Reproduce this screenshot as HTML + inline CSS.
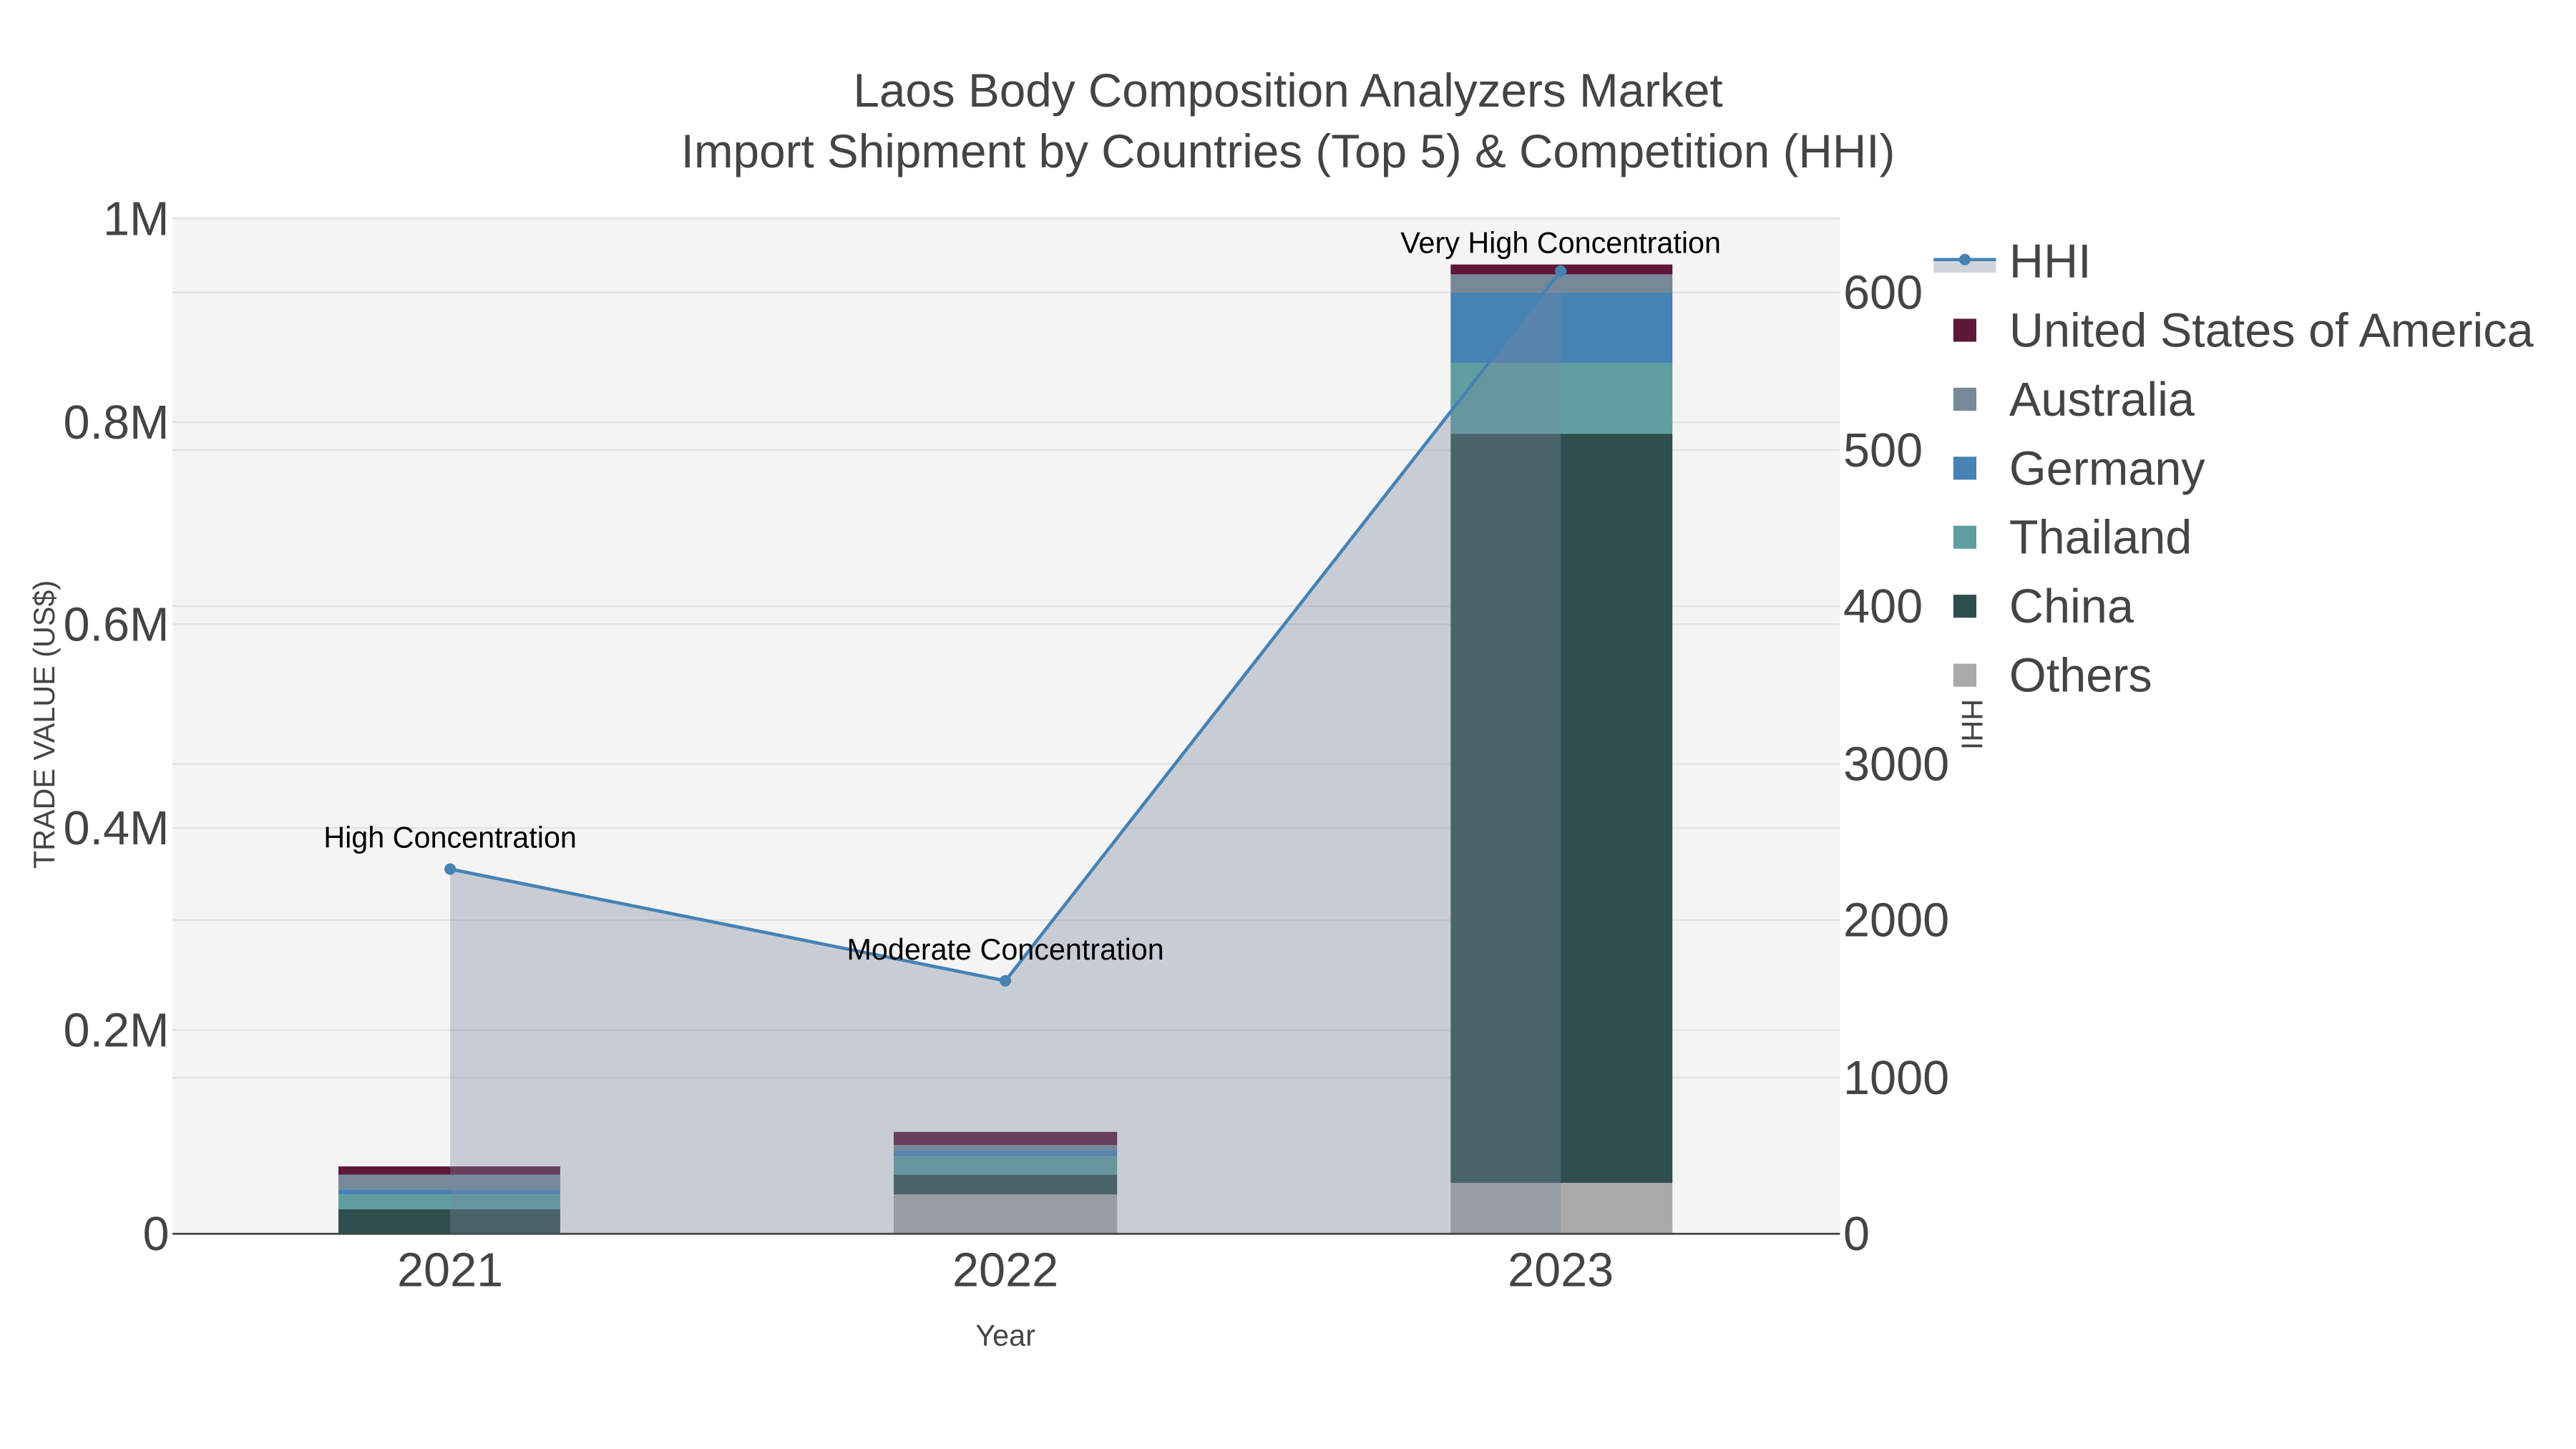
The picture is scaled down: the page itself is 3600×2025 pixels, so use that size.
<!DOCTYPE html>
<html><head><meta charset="utf-8"><style>html,body{margin:0;padding:0;background:#fff}svg{display:block}</style></head>
<body>
<svg width="3600" height="2025" viewBox="0 0 1568 882" preserveAspectRatio="none" xmlns="http://www.w3.org/2000/svg" font-family="Liberation Sans, sans-serif">
<rect x="0" y="0" width="1568" height="882" fill="#fff"/>
<rect x="105" y="132" width="1015" height="619" fill="#f4f4f4"/>
<g stroke="#e2e2e2" stroke-width="1">
<line x1="105" x2="1120" y1="627" y2="627"/><line x1="105" x2="1120" y1="504" y2="504"/>
<line x1="105" x2="1120" y1="380" y2="380"/><line x1="105" x2="1120" y1="257" y2="257"/>
<line x1="105" x2="1120" y1="133" y2="133"/>
<line x1="105" x2="1120" y1="656" y2="656"/><line x1="105" x2="1120" y1="560" y2="560"/>
<line x1="105" x2="1120" y1="465" y2="465"/><line x1="105" x2="1120" y1="369" y2="369"/>
<line x1="105" x2="1120" y1="274" y2="274"/><line x1="105" x2="1120" y1="178" y2="178"/>
</g>
<rect x="206" y="736" width="135" height="15" fill="#2f4f4f"/>
<rect x="206" y="727" width="135" height="9" fill="#5f9ea0"/>
<rect x="206" y="724" width="135" height="3" fill="#4682b4"/>
<rect x="206" y="715" width="135" height="9" fill="#778899"/>
<rect x="206" y="710" width="135" height="5" fill="#5e1739"/>
<rect x="544" y="727" width="136" height="24" fill="#aaaaaa"/>
<rect x="544" y="715" width="136" height="12" fill="#2f4f4f"/>
<rect x="544" y="704" width="136" height="11" fill="#5f9ea0"/>
<rect x="544" y="700" width="136" height="4" fill="#4682b4"/>
<rect x="544" y="697" width="136" height="3" fill="#778899"/>
<rect x="544" y="689" width="136" height="8" fill="#5e1739"/>
<rect x="883" y="720" width="135" height="31" fill="#aaaaaa"/>
<rect x="883" y="264" width="135" height="456" fill="#2f4f4f"/>
<rect x="883" y="221" width="135" height="43" fill="#5f9ea0"/>
<rect x="883" y="178" width="135" height="43" fill="#4682b4"/>
<rect x="883" y="167" width="135" height="11" fill="#778899"/>
<rect x="883" y="161" width="135" height="6" fill="#5e1739"/>
<path d="M274,751 L274,529 L612,597 L950,165 L950,751 Z" fill="rgba(122,136,158,0.36)"/>
<polyline points="274,529 612,597 950,165" fill="none" stroke="#4682b4" stroke-width="2"/>
<g fill="#4682b4"><circle cx="274" cy="529" r="3.5"/><circle cx="612" cy="597" r="3.5"/><circle cx="950" cy="165" r="3.5"/></g>
<line x1="105" x2="1120" y1="751" y2="751" stroke="#444" stroke-width="1.2"/>
<g font-size="18" fill="#000" text-anchor="middle">
<text x="274" y="516">High Concentration</text>
<text x="612" y="584">Moderate Concentration</text>
<text x="950" y="154">Very High Concentration</text>
</g>
<g font-size="28.6" fill="#444" text-anchor="middle">
<text x="784" y="65">Laos Body Composition Analyzers Market</text>
<text x="784" y="102">Import Shipment by Countries (Top 5) &amp; Competition (HHI)</text>
</g>
<g font-size="29" fill="#444" text-anchor="end">
<text x="103" y="143">1M</text><text x="103" y="267">0.8M</text><text x="103" y="390">0.6M</text>
<text x="103" y="514">0.4M</text><text x="103" y="637">0.2M</text><text x="103" y="761">0</text>
</g>
<g font-size="29" fill="#444">
<text x="1122" y="188">600</text><text x="1122" y="284">500</text><text x="1122" y="379">400</text>
<text x="1122" y="475">3000</text><text x="1122" y="570">2000</text><text x="1122" y="666">1000</text><text x="1122" y="761">0</text>
</g>
<g font-size="29" fill="#444" text-anchor="middle">
<text x="274" y="783">2021</text><text x="612" y="783">2022</text><text x="950" y="783">2023</text>
</g>
<text x="612" y="819" font-size="18" fill="#444" text-anchor="middle">Year</text>
<text transform="translate(33,441) rotate(-90)" font-size="18" fill="#444" text-anchor="middle">TRADE VALUE (US$)</text>
<text transform="translate(1194,441) rotate(90)" font-size="18" fill="#444" text-anchor="middle">HHI</text>
<rect x="1177" y="159" width="38" height="7" fill="rgba(122,136,158,0.36)"/>
<line x1="1177" x2="1215" y1="158" y2="158" stroke="#4682b4" stroke-width="2"/>
<circle cx="1196" cy="158" r="3.5" fill="#4682b4"/>
<g font-size="29" fill="#444">
<text x="1223" y="169">HHI</text>
<text x="1223" y="211">United States of America</text>
<text x="1223" y="253">Australia</text>
<text x="1223" y="295">Germany</text>
<text x="1223" y="337">Thailand</text>
<text x="1223" y="379">China</text>
<text x="1223" y="421">Others</text>
</g>
<rect x="1189" y="194" width="14" height="14" fill="#5e1739"/>
<rect x="1189" y="236" width="14" height="14" fill="#778899"/>
<rect x="1189" y="278" width="14" height="14" fill="#4682b4"/>
<rect x="1189" y="320" width="14" height="14" fill="#5f9ea0"/>
<rect x="1189" y="362" width="14" height="14" fill="#2f4f4f"/>
<rect x="1189" y="404" width="14" height="14" fill="#aaaaaa"/>
</svg>
</body></html>
